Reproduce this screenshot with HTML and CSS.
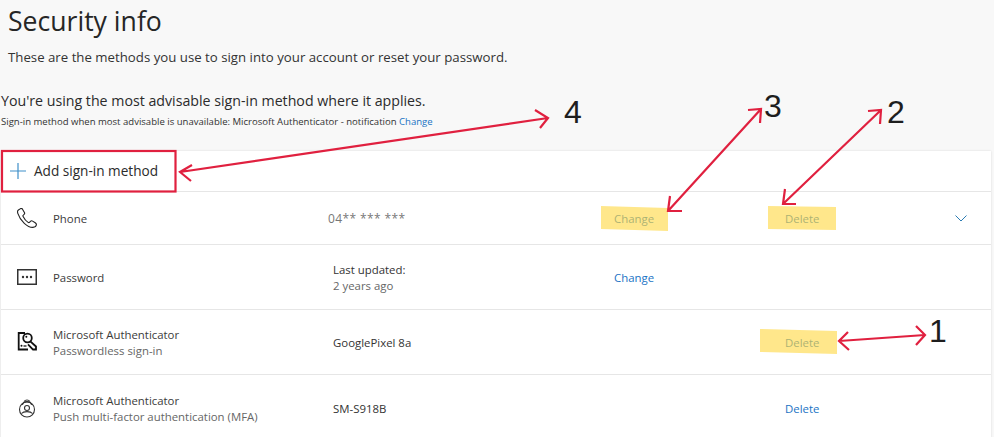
FILE: index.html
```html
<!DOCTYPE html>
<html lang="en">
<head>
<meta charset="utf-8">
<title>Security info</title>
<link rel="stylesheet" href="styles.css">
</head>
<body>
<main class="page">
  <header class="head">
    <h1 class="title">Security info</h1>
    <p class="lead">These are the methods you use to sign into your account or reset your password.</p>
  </header>
  <section class="default">
    <p class="default-main">You're using the most advisable sign-in method where it applies.</p>
    <p class="default-sub">Sign-in method when most advisable is unavailable: Microsoft Authenticator - notification <a class="link" href="#">Change</a></p>
  </section>
  <section class="card">
    <div class="add">
      <svg class="plus" viewBox="0 0 16 16" width="16" height="16"><path d="M8 0v16M0 8h16" fill="none" stroke="#3f8fc9" stroke-width="1.2"/></svg>
      <span>Add sign-in method</span>
    </div>
    <div class="row row-phone">
      <svg class="icon" viewBox="0 0 20 20" width="20" height="20"><path d="M3.6.6 1.4 2C.4 2.700.4 4 .8 5.300 2 9 4.300 12.500 7.300 15.300c2.500 2.300 5.500 4.200 8.600 4.100 1.600-.1 3.300-1 3.500-2.600.1-.9-.5-1.500-1.200-2l-2.600-1.700c-.8-.5-1.600-.3-2.200.3l-.9.9c-.4.400-.9.400-1.400.1-2.200-1.500-3.800-3.600-5-6-.3-.5-.2-1 .2-1.300l.8-.7c.6-.5.700-1.300.3-2L5.500 1.200C5 .4 4.300.2 3.600.6Z" fill="none" stroke="#222" stroke-width="1.1"/></svg>
      <div class="name">Phone</div>
      <div class="detail detail-phone">04** *** ***</div>
      <a class="link" href="#">Change</a>
      <a class="link" href="#">Delete</a>
      <svg class="chev" viewBox="0 0 12 7" width="12" height="7"><path d="M.5.5 6 6 11.500.5" fill="none" stroke="#2b7cb3" stroke-width="1"/></svg>
    </div>
    <div class="row">
      <svg class="icon" viewBox="0 0 20 16" width="20" height="16"><rect x=".75" y=".75" width="18.500" height="14.500" fill="none" stroke="#333" stroke-width="1.500"/><circle cx="6" cy="8" r="1.200" fill="#333"/><circle cx="10" cy="8" r="1.200" fill="#333"/><circle cx="14" cy="8" r="1.200" fill="#333"/></svg>
      <div class="name">Password</div>
      <div class="detail"><div>Last updated:</div><div class="muted">2 years ago</div></div>
      <a class="link" href="#">Change</a>
      <span></span>
      <span></span>
    </div>
    <div class="row">
      <svg class="icon" viewBox="0 0 20 20" width="20" height="20"><path d="M8 1H1.700v16.500H11" fill="none" stroke="#111" stroke-width="1.800"/><circle cx="4.500" cy="13.800" r="1" fill="#111"/><path d="M6.500 14h3" stroke="#111" stroke-width="1.300"/><circle cx="10.500" cy="6" r="4.300" fill="none" stroke="#111" stroke-width="1.800"/><circle cx="9.300" cy="4.800" r="1" fill="#111"/><path d="m13.300 9.300 5.700 5.200v3h-3l-5-5.200" fill="none" stroke="#111" stroke-width="1.800"/></svg>
      <div class="name"><div>Microsoft Authenticator</div><div class="muted">Passwordless sign-in</div></div>
      <div class="detail">GooglePixel 8a</div>
      <span></span>
      <a class="link" href="#">Delete</a>
      <span></span>
    </div>
    <div class="row">
      <svg class="icon" viewBox="0 0 20 20" width="20" height="20"><circle cx="10" cy="11.500" r="7.500" fill="none" stroke="#333" stroke-width="1.100"/><path d="M5.500 7C6 2.500 14 2.500 14.500 7" fill="none" stroke="#333" stroke-width="1.100"/><path d="M7 3.500c1.500-2 4.500-2 6 0" fill="none" stroke="#333" stroke-width="1.100"/><circle cx="10" cy="10" r="2.500" fill="none" stroke="#333" stroke-width="1.100"/><path d="M4.500 15.500c2-2.500 9-2.500 11 0" fill="none" stroke="#333" stroke-width="1.100"/></svg>
      <div class="name"><div>Microsoft Authenticator</div><div class="muted">Push multi-factor authentication (MFA)</div></div>
      <div class="detail">SM-S918B</div>
      <span></span>
      <a class="link" href="#">Delete</a>
      <span></span>
    </div>
  </section>
</main>
<svg class="marks" viewBox="0 0 994 437" width="994" height="437">
  <g class="hl">
    <path d="M601 206 668 208 668 231 601 229Z"/>
    <path d="M768 206 836 207 836 230 768 229Z"/>
    <path d="M760 329 837 331 837 354 760 352Z"/>
  </g>
  <g class="arrows">
    <rect x="2" y="151" width="173.500" height="40.500"/>
    <path d="M180 172 548 118M192 165 180 172 191 181M535 110 548 118 540 128"/>
    <path d="M668 211 761 109M670 196 668 211 682 211M748 110 761 109 760 123"/>
    <path d="M783 204 881 110M785 189 783 204 796 204M868 111 881 110 880 124"/>
    <path d="M839 341 925 335M848 332 839 341 849 350M916 326 925 335 916 345"/>
  </g>
  <text class="num" x="564" y="123">4</text>
  <text class="num" x="764" y="117">3</text>
  <text class="num" x="887" y="123">2</text>
  <text class="num" x="929" y="342">1</text>
</svg>
</body>
</html>
```
FILE: styles.css
```css
* { box-sizing: border-box; }
html, body { margin: 0; height: 437px; overflow: hidden; }
body {
  position: relative;
  background: #f8f8f8;
  color: #2b2b2b;
  font-family: "Open Sans", "Noto Sans", "Liberation Sans", sans-serif;
}
.page { padding: 0 3px 0 1px; }
.head { padding: 3px 0 0 7px; }
.title { margin: 0; font-size: 26.600px; line-height: 36px; font-weight: 400; color: #262626; }
.lead { margin: 8px 0 0; font-size: 13.240px; line-height: 20px; color: #333; }
.default { margin-top: 24px; }
.default-main { margin: 0; font-size: 14.200px; line-height: 20px; color: #2b2b2b; }
.default-sub { margin: 4px 0 0; font-size: 9.550px; line-height: 13px; color: #333; }
.link { color: #1a73c4; text-decoration: none; }
.card {
  margin-top: 23px;
  background: #fff;
  box-shadow: 0 0 2px rgba(0, 0, 0, .12);
  font-size: 11.400px;
  line-height: 16px;
}
.add {
  height: 41px;
  display: flex;
  align-items: center;
  gap: 8px;
  padding-left: 9px;
  border-bottom: 1px solid #e6e6e6;
  font-size: 13.600px;
  color: #2b2b2b;
}
.row {
  display: grid;
  grid-template-columns: 52px 280px 281px 171px 170px 1fr;
  align-items: center;
  height: 65px;
  border-bottom: 1px solid #e6e6e6;
  color: #333;
}
.row:last-child { border-bottom: 0; }
.row-phone { height: 53px; }
.row > .name, .row > .detail, .row > .link { margin-top: 2px; }
.icon { margin-left: 16px; }
.name { color: #3b3b3b; }
.muted { color: #666; }
.detail { color: #333; }
.detail-phone { margin-left: -5px; font-size: 12px; letter-spacing: .4px; color: #777; }
.marks { position: absolute; left: 0; top: 0; pointer-events: none; }
.hl { fill: #ffd944; opacity: .62; }
.arrows { fill: none; stroke: #e0203f; stroke-width: 2.200; }
.num { font-family: "Liberation Sans", Arial, sans-serif; font-size: 32px; fill: #1e1e1e; }
```
